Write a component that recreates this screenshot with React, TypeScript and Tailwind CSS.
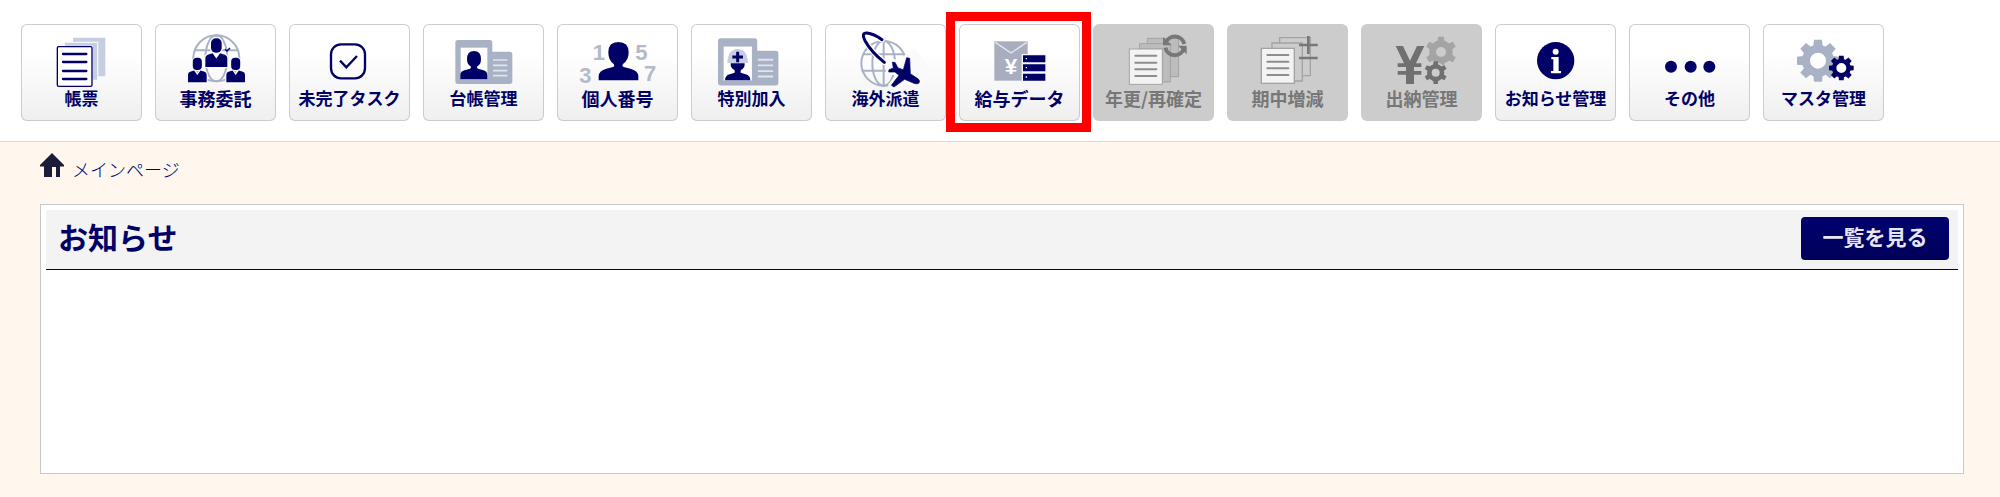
import type { ReactNode } from 'react';
import clsx from 'clsx';

const NAVY = '#000066';
const STEEL = '#a9b2c5';
const GRAY = '#777777';

type MenuItem = {
  label: string;
  // left edge of the icon's viewBox
  x: number;
  icon: ReactNode;
  size?: 'lg';
  disabled?: boolean;
  highlight?: boolean;
};

function Gear({ cx, cy, r, hole, color, teeth = 8, turn = 0 }: { cx: number; cy: number; r: number; hole: number; color: string; teeth?: number; turn?: number }) {
  const body = r * 0.76;
  const tooth = r * 0.38;
  return (
    <g transform={`translate(${cx} ${cy}) rotate(${turn})`} fill={color}>
      <circle r={(body + hole) / 2} fill="none" stroke={color} strokeWidth={body - hole} />
      {Array.from({ length: teeth }, (_, i) => (
        <path
          key={i}
          d={`M${-tooth / 1.7} ${-body + 4} L${-tooth / 2} ${-r} H${tooth / 2} L${tooth / 1.7} ${-body + 4} Z`}
          transform={`rotate(${(360 / teeth) * i})`}
        />
      ))}
    </g>
  );
}

function Member({ x, y, s }: { x: number; y: number; s: number }) {
  return (
    <g transform={`translate(${x} ${y}) scale(${s})`} fill={NAVY}>
      <rect x="-17" y="-46" width="34" height="46" rx="15" />
      <path d="M-35 46 V18 Q-35 9 -27 7 L-12 2 L0 19 L12 2 L27 7 Q35 9 35 18 V46 Z" />
    </g>
  );
}

function Card({ x, y }: { x: number; y: number }) {
  return (
    <g transform={`translate(${x} ${y})`}>
      <path d="M8 0 H103 Q111 0 111 8 V35 H163 Q171 35 171 43 V124 Q171 132 163 132 H8 Q0 132 0 124 V8 Q0 0 8 0 Z" fill={STEEL} />
      <rect x="16" y="23" width="80" height="95" fill="#fff" />
      <path d="M113 60 H156 M113 76 H156 M113 92 H156 M113 107 H156" stroke="#dfe4ed" strokeWidth="5" />
    </g>
  );
}

function Lines({ x, ys, width, color, weight }: { x: number; ys: number[]; width: number; color: string; weight: number }) {
  return <path d={ys.map((y) => `M${x} ${y} h${width}`).join(' ')} stroke={color} strokeWidth={weight} strokeLinecap="round" />;
}

const FormsIcon = (
  <>
    <path d="M219 113 H316 V229 H290 V129 H219 Z" fill="#c6cee2" />
    <path d="M193 127 H293 V241 H277 V139 H193 Z" fill="#c6cee2" stroke="#f4f6fa" strokeWidth="4" />
    <rect x="172" y="140" width="104" height="119" rx="4" fill="#fff" stroke={NAVY} strokeWidth="4" />
    <Lines x={189} ys={[162, 186, 213, 237]} width={70} color={NAVY} weight={7} />
  </>
);

const OfficeIcon = (
  <>
    <g fill="none" stroke={STEEL} strokeWidth="6">
      <circle cx="649" cy="175" r="69" />
      <ellipse cx="649" cy="175" rx="33" ry="69" />
      <path d="M585 151 H713 M649 106 V130" />
    </g>
    <g stroke="#fafafa" strokeWidth="8">
      <Member x={649} y={158} s={0.94} />
      <Member x={592} y={210} s={0.8} />
      <Member x={707} y={210} s={0.8} />
    </g>
    <Member x={649} y={158} s={0.94} />
    <Member x={592} y={210} s={0.8} />
    <Member x={707} y={210} s={0.8} />
    <path d="M675 148 L681 153 L690 144" fill="none" stroke={NAVY} strokeWidth="4" />
  </>
);

const TaskIcon = (
  <g fill="none" stroke={NAVY}>
    <rect x="153" y="133" width="102" height="102" rx="30" strokeWidth="7" />
    <path d="M180 182 L199 202 L231 168" strokeWidth="7" />
  </g>
);

const LedgerIcon = (
  <>
    <Card x={526} y={120} />
    <path
      d="M541 238 V226 Q541 213 556 210 L568 207 Q574 205 573 200 Q561 194 561 178 Q561 153 582 153 Q603 153 603 178 Q603 194 591 200 Q590 205 596 207 L608 210 Q622 213 622 226 V238 Z"
      fill={NAVY}
    />
  </>
);

const NumberIcon = (
  <>
    <g fill="#b3bac9" fontFamily="Liberation Sans, sans-serif" fontWeight="700" fontSize="66">
      <text x="143" y="179">1</text>
      <text x="271" y="181">5</text>
      <text x="103" y="248">3</text>
      <text x="297" y="244">7</text>
    </g>
    <path
      d="M161 241 V228 Q162 212 184 206 L204 201 Q210 198 206 192 Q190 181 190 157 Q190 126 220 126 Q251 126 251 157 Q251 181 234 192 Q230 198 236 201 L256 206 Q279 212 280 228 V241 Z"
      fill={NAVY}
    />
  </>
);

const SpecialIcon = (
  <>
    <g transform="translate(519 115) scale(1.06 1.07)">
      <Card x={0} y={0} />
    </g>
    <path d="M547 189 Q549 147 578 147 Q607 147 609 189 Z" fill="#c6cee2" />
    <path
      d="M540 241 Q540 227 554 223 L569 218 V211 Q556 205 557 190 L599 190 Q600 205 587 211 V218 L602 223 Q616 227 616 241 Z"
      fill={NAVY}
    />
    <path d="M578 155 V187 M562 171 H594" stroke={NAVY} strokeWidth="9" />
  </>
);

const planePath =
  'M232 187 L240 187 L249 204 L265 209 L275 173 L284 175 L286 221 L310 237 Q317 244 311 250 Q306 253 297 250 L269 238 L237 261 L229 256 L252 226 L240 216 L221 216 L222 209 L235 204 Z';
const orbitPath = 'M208 187 Q168 155 150 122 Q138 98 156 99 Q176 101 201 119';

const OverseasIcon = (
  <>
    <g fill="none" stroke={STEEL} strokeWidth="6">
      <circle cx="206" cy="190" r="67" />
      <ellipse cx="206" cy="190" rx="34" ry="67" />
      <path d="M206 123 V257 M146 163 H268 M140 212 H272" />
    </g>
    <g fill="none" strokeLinecap="round">
      <path d={orbitPath} stroke="#fdfdfd" strokeWidth="17" />
      <path d={orbitPath} stroke={NAVY} strokeWidth="9" />
    </g>
    <path d="M232 187 L285 121 L330 180 L310 237 Z" fill="#fafafa" transform="translate(12 22)" />
    <path d={planePath} fill="#fafafa" stroke="#fafafa" strokeWidth="18" strokeLinejoin="round" />
    <path d={planePath} fill={NAVY} stroke={NAVY} strokeWidth="2" strokeLinejoin="round" />
  </>
);

const PayrollIcon = (
  <>
    <rect x="538" y="124" width="100" height="118" fill="#a8aec0" />
    <path d="M541 127 L588 159 L635 127" fill="none" stroke="#e8e8ec" strokeWidth="4" />
    <text x="588" y="223" textAnchor="middle" fill="#fff" fontFamily="Liberation Sans, sans-serif" fontWeight="700" fontSize="67">¥</text>
    <rect x="620" y="162" width="75" height="84" fill="#f6f6f6" />
    <path d="M624 166 H691 V187 H624 Z M624 193 H691 V214 H624 Z M624 221 H691 V242 H624 Z" fill={NAVY} />
    <path d="M632 176 h4 M632 203 h4 M632 231 h4" stroke="#fff" strokeWidth="4" />
  </>
);

const YearlyIcon = (
  <>
    <path d="M187 115 H281 V230 H256 V131 H187 Z" fill="#bcbcbc" stroke="#a3a3a3" strokeWidth="3" />
    <path d="M164 131 H256 V246 H233 V147 H164 Z" fill="#bcbcbc" stroke="#a3a3a3" strokeWidth="3" />
    <rect x="133" y="147" width="99" height="106" fill="#f3f3f3" stroke="#a3a3a3" strokeWidth="3" />
    <Lines x={151} ys={[167, 188, 208, 228]} width={63} color="#8d8d8d" weight={6} />
    <g fill="none" stroke={GRAY} strokeWidth="12">
      <path d="M242 130 A29 29 0 0 1 298 132" />
      <path d="M297 145 A29 29 0 0 1 241 143" />
    </g>
    <path d="M234 111 V136 H260 Z M305 163 V137 H279 Z" fill={GRAY} />
  </>
);

const TermIcon = (
  <>
    <path d="M584 127 V113 H676 V227 H653 M561 143 V129 H652 V243 H630" fill="none" stroke="#a3a3a3" strokeWidth="4" />
    <rect x="529" y="145" width="99" height="105" fill="#f3f3f3" stroke="#a3a3a3" strokeWidth="4" />
    <Lines x={547} ys={[165, 185, 205, 225]} width={63} color="#8d8d8d" weight={6} />
    <path d="M670 108 V162 M642 135 H698 M642 174 H698" stroke={GRAY} strokeWidth="8" />
  </>
);

const CashIcon = (
  <>
    <path d="M137 138 H159 L180 182 L201 138 H223 L198 190 H214 V201 H192 V213 H214 V224 H192 V252 H168 V224 H143 V213 H168 V201 H143 V190 H162 Z" fill="#707070" />
    <Gear cx={273} cy={156} r={46} hole={15} teeth={6} color="#a4a4a4" />
    <circle cx="257" cy="218" r="31" fill="#cccccc" />
    <Gear cx={257} cy={218} r={34} hole={12} color="#707070" teeth={6} />
  </>
);

const InfoIcon = (
  <>
    <circle cx="617" cy="182" r="56" fill={NAVY} />
    <circle cx="617" cy="155" r="9" fill="#fff" />
    <path d="M604 171 H626 V213 H633 V220 H603 V213 H610 V178 H604 Z" fill="#fff" />
  </>
);

const OtherIcon = (
  <g fill={NAVY}>
    <circle cx="153" cy="200" r="18" />
    <circle cx="212" cy="200" r="18" />
    <circle cx="268" cy="200" r="18" />
  </g>
);

const MasterIcon = (
  <>
    <Gear cx={594} cy={182} r={63} hole={24} color={STEEL} />
    <Gear cx={664} cy={204} r={37} hole={15} color={NAVY} />
  </>
);

const menu: MenuItem[] = [
  { label: '帳票', x: 63, icon: FormsIcon },
  { label: '事務委託', x: 465, icon: OfficeIcon, size: 'lg' },
  { label: '未完了タスク', x: 27, icon: TaskIcon },
  { label: '台帳管理', x: 429, icon: LedgerIcon },
  { label: '個人番号', x: 36, icon: NumberIcon, size: 'lg' },
  { label: '特別加入', x: 438, icon: SpecialIcon },
  { label: '海外派遣', x: 30, icon: OverseasIcon },
  { label: '給与データ', x: 432, icon: PayrollIcon, size: 'lg', highlight: true },
  { label: '年更/再確定', x: 24, icon: YearlyIcon, size: 'lg', disabled: true },
  { label: '期中増減', x: 426, icon: TermIcon, size: 'lg', disabled: true },
  { label: '出納管理', x: 33, icon: CashIcon, size: 'lg', disabled: true },
  { label: 'お知らせ管理', x: 435, icon: InfoIcon },
  { label: 'その他', x: 27, icon: OtherIcon },
  { label: 'マスタ管理', x: 429, icon: MasterIcon },
];

function MenuButton({ item }: { item: MenuItem }) {
  return (
    <li className="relative">
      <button
        type="button"
        disabled={item.disabled}
        className={clsx(
          'flex h-[97px] w-[121px] flex-col items-center rounded-md',
          item.disabled
            ? 'bg-[#cccccc] text-[#777777]'
            : 'cursor-pointer bg-linear-to-b from-white from-30% to-[#efefef] text-[#000066] ring-1 ring-[#cccccc] ring-inset',
        )}
      >
        <svg viewBox={`${item.x} 72 363 198`} className="h-[66px] w-[121px]" fill="none" aria-hidden="true">
          {item.icon}
        </svg>
        <span className={clsx('leading-4 font-bold whitespace-nowrap', item.size === 'lg' ? 'text-[18px]' : 'text-[17px]')}>
          {item.label}
        </span>
      </button>
      {item.highlight && (
        <div className="pointer-events-none absolute -top-3 -right-[11px] -bottom-[11px] -left-[13px] border-9 border-[#ff0000]" />
      )}
    </li>
  );
}

function App() {
  return (
    <div className="flex min-h-screen flex-col bg-[#fff7ed] font-['Noto_Sans_CJK_JP',sans-serif] text-[#000066]">
      <header className="border-b border-[#d9d9d9] bg-white pt-6 pb-5 pl-[21px]">
        <nav>
          <ul className="flex flex-wrap gap-[13px]">
            {menu.map((item) => (
              <MenuButton key={item.label} item={item} />
            ))}
          </ul>
        </nav>
      </header>

      <main className="flex grow flex-col pt-[10px] pr-9 pb-[23px] pl-10">
        <a href="#main" className="flex h-[26px] items-end gap-2 self-start">
          <svg viewBox="0 0 24 26" className="h-[26px] w-6" aria-hidden="true">
            <path d="M12 1 L24 13 V14.5 H20 V25 H16 V15 H12 V25 H4 V14.5 H0 V13 Z" fill="#1a1c3a" />
          </svg>
          <span className="text-[18px] leading-[18px] font-light">メインページ</span>
        </a>

        <section className="mt-[26px] grow border border-[#c8c8c8] bg-white p-[5px]">
          <div className="flex h-[60px] items-center justify-between border-b border-[#000055] bg-[#f3f3f3] pr-[9px] pb-[3px] pl-3">
            <h1 className="pb-1 text-[30px] leading-8 font-bold">お知らせ</h1>
            <button type="button" className="h-[43px] w-[148px] cursor-pointer rounded bg-linear-to-b from-[#000070] to-[#00005a] pb-1 text-[21px] leading-6 font-bold text-[#e6e6f2]">
              一覧を見る
            </button>
          </div>
        </section>
      </main>
    </div>
  );
}

export default App;
